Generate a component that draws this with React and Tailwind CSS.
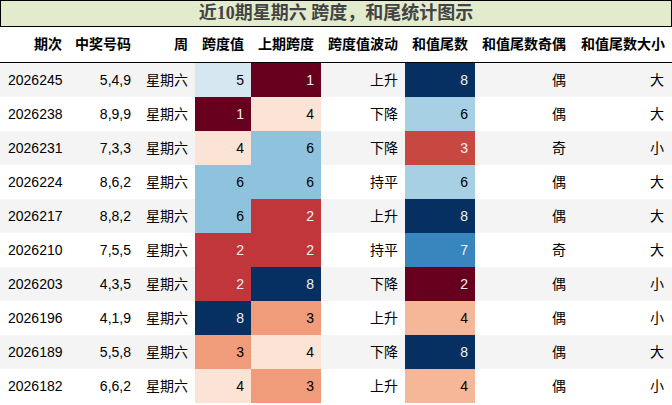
const rows = [
  ["2026245", "5,4,9", "星期六", 5, 1, "上升", 8, "偶", "大"],
  ["2026238", "8,9,9", "星期六", 1, 4, "下降", 6, "偶", "大"],
  ["2026231", "7,3,3", "星期六", 4, 6, "下降", 3, "奇", "小"],
  ["2026224", "8,6,2", "星期六", 6, 6, "持平", 6, "偶", "大"],
  ["2026217", "8,8,2", "星期六", 6, 2, "上升", 8, "偶", "大"],
  ["2026210", "7,5,5", "星期六", 2, 2, "持平", 7, "奇", "大"],
  ["2026203", "4,3,5", "星期六", 2, 8, "下降", 2, "偶", "小"],
  ["2026196", "4,1,9", "星期六", 8, 3, "上升", 4, "偶", "小"],
  ["2026189", "5,5,8", "星期六", 3, 4, "下降", 8, "偶", "大"],
  ["2026182", "6,6,2", "星期六", 4, 3, "上升", 4, "偶", "小"],
];

const spanColors = {
  1: "bg-[#67001f] text-[#f1f1f1]",
  2: "bg-[#c0363a] text-[#f1f1f1]",
  3: "bg-[#f09c7b] text-black",
  4: "bg-[#fbe3d5] text-black",
  5: "bg-[#d7e7f1] text-black",
  6: "bg-[#8ec2dd] text-black",
  8: "bg-[#053061] text-[#f1f1f1]",
};

const tailColors = {
  2: "bg-[#67001f] text-[#f1f1f1]",
  3: "bg-[#c94741] text-[#f1f1f1]",
  4: "bg-[#f6b799] text-black",
  6: "bg-[#a7d0e4] text-black",
  7: "bg-[#3986bf] text-[#f1f1f1]",
  8: "bg-[#053061] text-[#f1f1f1]",
};

const widths = [
  "w-[69px]",
  "w-[69px]",
  "w-[57px]",
  "w-[56px]",
  "w-[70px]",
  "w-[84px]",
  "w-[70px]",
  "w-[98px]",
  "w-[99px]",
];

const headers = ["期次", "中奖号码", "周", "跨度值", "上期跨度", "跨度值波动", "和值尾数", "和值尾数奇偶", "和值尾数大小"];

export default function App() {
  return (
    <div
      className="w-[672px] h-[405px] bg-white overflow-hidden text-[14px] text-black"
      style={{ fontFamily: '"Liberation Sans", "Noto Sans CJK SC", sans-serif' }}
    >
      <div
        className="h-[27px] border border-black bg-[#e3ebcd] flex items-center justify-center text-[18px] font-bold text-[#444]"
        style={{ fontFamily: '"Liberation Serif", "Noto Sans CJK SC", serif' }}
      >
        近10期星期六 跨度，和尾统计图示
      </div>
      <div className="flex h-[36px] border-b border-black font-bold">
        {headers.map((h, i) => (
          <div key={h} className={`${widths[i]} shrink-0 flex items-center justify-end pr-[7px]`}>
            {h}
          </div>
        ))}
      </div>
      {rows.map((r, ri) => (
        <div key={r[0]} className={`flex h-[34px] ${ri % 2 === 0 ? "bg-[#f4f4f4]" : "bg-white"}`}>
          <div className={`${widths[0]} shrink-0 flex items-center pl-[8px]`}>{r[0]}</div>
          <div className={`${widths[1]} shrink-0 flex items-center justify-end pr-[7px]`}>{r[1]}</div>
          <div className={`${widths[2]} shrink-0 flex items-center justify-end pr-[7px]`}>{r[2]}</div>
          <div className={`${widths[3]} shrink-0 flex items-center justify-end pr-[7px] ${spanColors[r[3]]}`}>{r[3]}</div>
          <div className={`${widths[4]} shrink-0 flex items-center justify-end pr-[7px] ${spanColors[r[4]]}`}>{r[4]}</div>
          <div className={`${widths[5]} shrink-0 flex items-center justify-end pr-[7px]`}>{r[5]}</div>
          <div className={`${widths[6]} shrink-0 flex items-center justify-end pr-[7px] ${tailColors[r[6]]}`}>{r[6]}</div>
          <div className={`${widths[7]} shrink-0 flex items-center justify-end pr-[7px]`}>{r[7]}</div>
          <div className={`${widths[8]} shrink-0 flex items-center justify-end pr-[8px]`}>{r[8]}</div>
        </div>
      ))}
    </div>
  );
}
